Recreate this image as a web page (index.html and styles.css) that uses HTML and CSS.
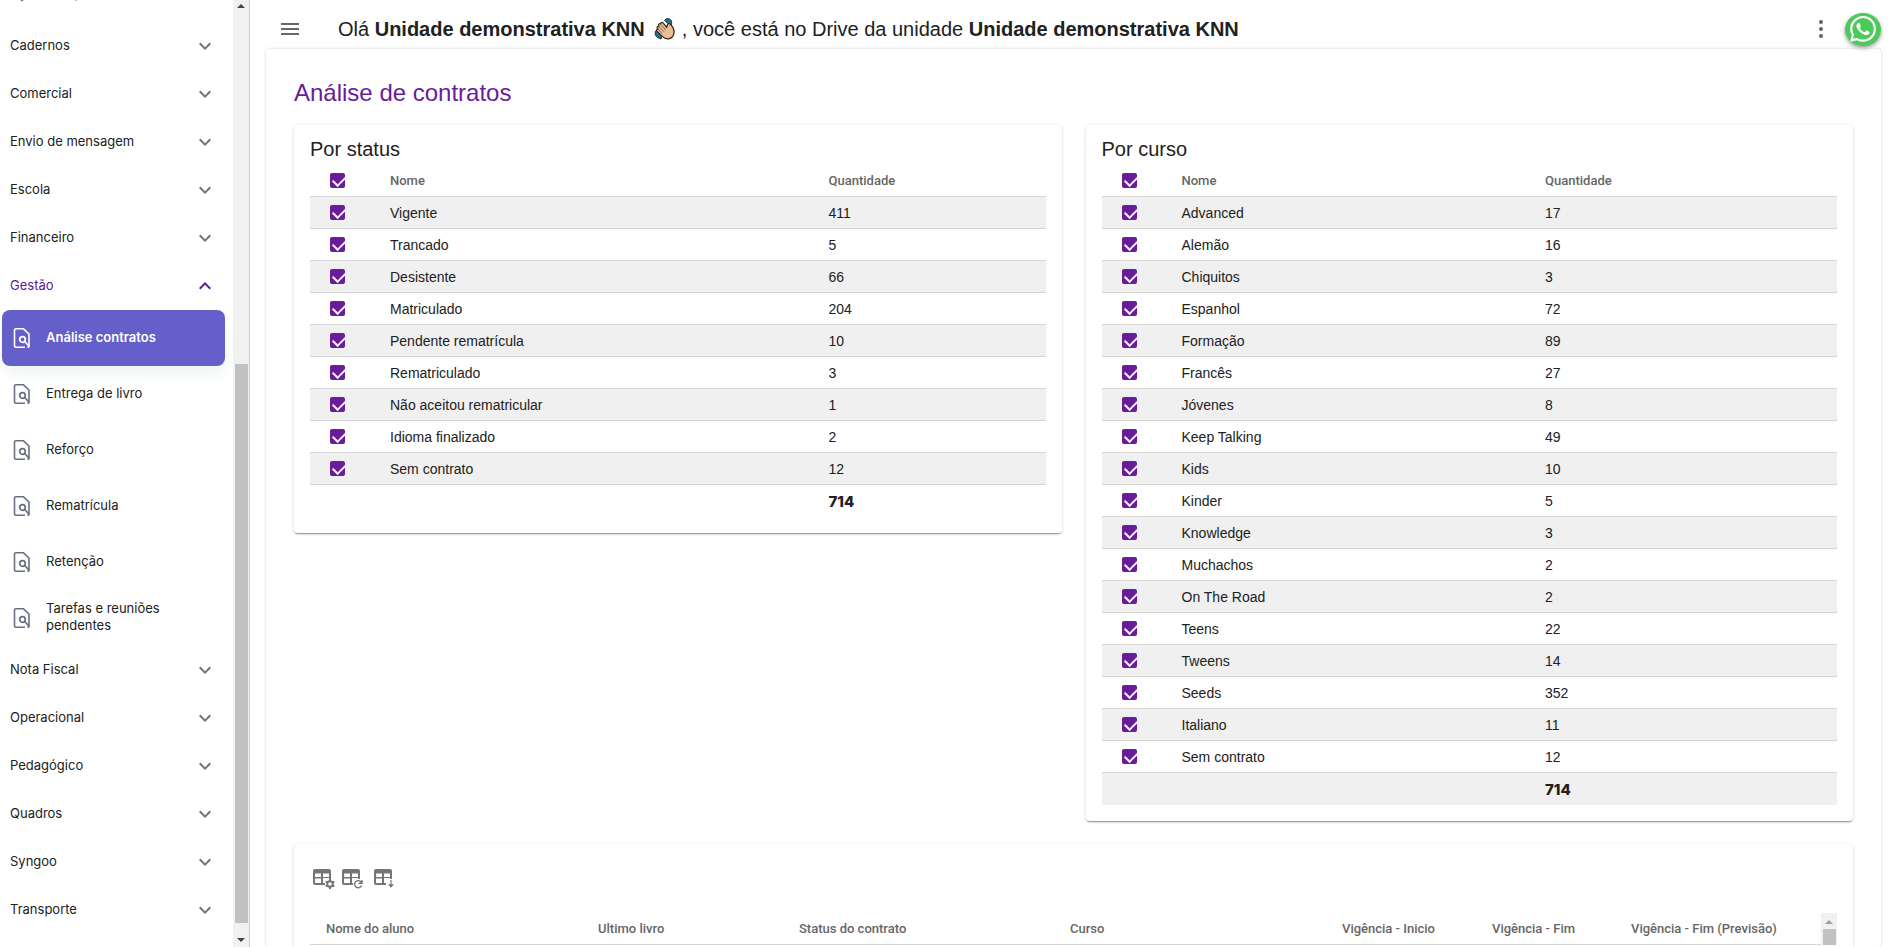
FILE: index.html
```html
<!DOCTYPE html>
<html lang="pt-BR">
<head>
<meta charset="utf-8">
<title>Análise de contratos</title>
<link rel="stylesheet" href="styles.css">
</head>
<body>
<svg class="defs" aria-hidden="true">
  <symbol id="chev" viewBox="0 0 24 24"><path d="M7.4 8.6 12 13.2l4.6-4.6L18 10l-6 6-6-6z" fill="currentColor"/></symbol>
  <symbol id="doc" viewBox="0 0 20 22"><path d="M15.500 20.500l1.500-1V7L11.500 1.800H4Q2.500 1.800 2.500 3.300V18.700Q2.500 20.200 4 20.200H13" fill="none" stroke="currentColor" stroke-width="1.600" stroke-linejoin="round"/><circle cx="10.500" cy="12.500" r="2.800" fill="none" stroke="currentColor" stroke-width="1.700"/><path d="M12.500 14.500l4.500 4.500" stroke="currentColor" stroke-width="1.700"/></symbol>
  <symbol id="pin" viewBox="0 0 20 22"><path d="M10 1.500a6 6 0 0 0-6 6c0 4 6 10 6 10s6-6 6-10a6 6 0 0 0-6-6z" fill="none" stroke="currentColor" stroke-width="1.600"/></symbol>
  <symbol id="grid" viewBox="0 0 24 24"><path fill-rule="evenodd" d="M3 2h14a2 2 0 0 1 2 2v8h-2v-1h-6v5h2v2H3a2 2 0 0 1-2-2V4a2 2 0 0 1 2-2zM3 6.500v3.500h6V6.500zM11 6.500v3.500h6V6.500zM3 11.500V16h6v-4.500z" fill="currentColor"/></symbol>
</svg>
<div class="app">
  <aside class="side">
    <nav class="menu" id="menu"></nav>
    <div class="bar"><span class="arrow up"></span><span class="thumb"></span><span class="arrow down"></span></div>
  </aside>
  <div class="page">
    <header class="top">
      <button class="icon-btn" aria-label="Menu"><svg width="18" height="12" viewBox="0 0 18 12"><path d="M0 1h18M0 6h18M0 11h18" stroke="#666" stroke-width="2"/></svg></button>
      <p class="hello">Olá <b>Unidade demonstrativa KNN</b>
        <svg class="wave" width="22" height="22" viewBox="0 0 22 22"><path d="M10.500 2.500Q12-.5 15 .8q3.500 1.200 2.500 6l-3-1zM1.500 13q-2 6 5.500 8l1-3-5-4z" fill="#28708a" stroke="#1d3a45"/><path d="M3 9.500q.5-1.500 2-.8l-.6-1.900q.8-1.800 2.200-.8l.4-1.200q1.300-1 2.300.3l3.400 4.200.8-2.600q.5-1.700 2.200-.9l1 .8q3.800 3.600 3.300 8-.5 5-4.500 6-4 .9-7-2l-5.700-5.500q-.8-1.400.7-2l1 .3-1.300-1.200z" fill="#e8bd98" stroke="#33241b" stroke-width="1.200" stroke-linejoin="round"/><path d="M5 8.700l5 5M7 6.500l4.600 5.400M3.500 10.500l4.500 5" stroke="#8a6248" fill="none"/></svg>
        , você está no Drive da unidade <b>Unidade demonstrativa KNN</b></p>
      <button class="icon-btn" aria-label="Mais opções"><svg width="6" height="20" viewBox="0 0 6 20" fill="#5f6368"><circle cx="3" cy="3" r="2"/><circle cx="3" cy="10" r="2"/><circle cx="3" cy="17" r="2"/></svg></button>
      <a class="whats" href="#" aria-label="WhatsApp"><svg width="26" height="26" viewBox="0 0 24 24" fill="#fff"><path d="M17.472 14.382c-.297-.149-1.758-.867-2.030-.967-.273-.099-.471-.148-.670.150-.197.297-.767.966-.940 1.164-.173.199-.347.223-.644.075-.297-.150-1.255-.463-2.390-1.475-.883-.788-1.480-1.761-1.653-2.059-.173-.297-.018-.458.130-.606.134-.133.298-.347.446-.520.149-.174.198-.298.298-.497.099-.198.050-.371-.025-.520-.075-.149-.669-1.612-.916-2.207-.242-.579-.487-.500-.669-.510-.173-.008-.371-.010-.570-.010-.198 0-.520.074-.792.372-.272.297-1.040 1.016-1.040 2.479 0 1.462 1.065 2.875 1.213 3.074.149.198 2.096 3.200 5.077 4.487.709.306 1.262.489 1.694.625.712.227 1.360.195 1.871.118.571-.085 1.758-.719 2.006-1.413.248-.694.248-1.289.173-1.413-.074-.124-.272-.198-.570-.347zM.057 24l1.687-6.163A11.900 11.900 0 0 1 .150 11.893C.157 5.335 5.495 0 12.050 0a11.900 11.900 0 0 1 11.893 11.893c-.003 6.557-5.338 11.892-11.893 11.892a11.900 11.900 0 0 1-5.688-1.448zM6.600 20.200c1.600 1 3.200 1.600 5.450 1.600 5.450 0 9.890-4.430 9.890-9.890A9.880 9.880 0 1 0 3.700 17.100l-1 3.650z"/></svg></a>
    </header>
    <main class="sheet">
      <h1>Análise de contratos</h1>
      <div class="cards">
        <section class="card"><h2>Por status</h2><table class="list status" id="status"></table></section>
        <section class="card"><h2>Por curso</h2><table class="list curso" id="curso"></table></section>
      </div>
      <section class="card students">
        <div class="tools">
          <button aria-label="Configurar colunas"><svg width="24" height="24" viewBox="0 0 24 24"><use href="#grid"/><circle cx="18" cy="17" r="5" fill="#fff"/><circle cx="18" cy="17" r="2.800" fill="none" stroke="currentColor" stroke-width="2"/><path d="M18 12v2M18 20v2M13.700 14.500l1.600 1M20.700 18.500l1.600 1M13.700 19.500l1.600-1M20.700 15.500l1.600-1" stroke="currentColor" stroke-width="2"/></svg></button>
          <button aria-label="Restaurar colunas"><svg width="24" height="24" viewBox="0 0 24 24"><use href="#grid"/><circle cx="17" cy="17" r="5" fill="#fff"/><path d="M20.400 15.500a3.600 3.600 0 1 0 .2 3M21 13v3.200h-3.500" fill="none" stroke="currentColor" stroke-width="1.400"/></svg></button>
          <button class="apart" aria-label="Exportar tabela"><svg width="24" height="24" viewBox="0 0 24 24"><use href="#grid"/><path d="M18 13v6M16.300 17.800h3.400L18 19.800z" fill="currentColor" stroke="currentColor" stroke-width="1.200"/></svg></button>
        </div>
        <div class="scroller">
          <table class="wide"><thead><tr><th>Nome do aluno</th><th>Ultimo livro</th><th>Status do contrato</th><th>Curso</th><th>Vigência - Inicio</th><th>Vigência - Fim</th><th>Vigência - Fim (Previsão)</th></tr></thead></table>
          <div class="bar light"><span class="arrow up"></span><span class="thumb"></span></div>
        </div>
      </section>
    </main>
  </div>
</div>
<script src="app.js"></script>
</body>
</html>
```
FILE: styles.css
```css
* { box-sizing: border-box; }
body { margin: 0; background: #fff; color: #212121; font-family: "Liberation Sans", Arial, sans-serif; font-size: 14px; }
button { border: 0; padding: 0; background: none; font: inherit; color: inherit; cursor: pointer; }
a { color: inherit; text-decoration: none; }
.defs { display: none; }
.app { display: flex; height: 100vh; overflow: hidden; }

.side { display: flex; flex: none; width: 250px; border-right: 1px solid #ccc; overflow: hidden; }
.menu { display: flex; flex: 1; flex-direction: column; justify-content: flex-end; padding-bottom: 13px; font-family: Inter, sans-serif; font-size: 13px; }
.menu span { padding-bottom: 2px; }
.group { display: flex; flex: none; align-items: center; justify-content: space-between; height: 48px; padding: 0 16px 0 10px; text-align: left; }
.group svg { width: 24px; height: 24px; color: #757575; }
.group.open, .group.open svg { color: #5b1a94; }
.group.open svg { transform: rotate(180deg); }
.item { display: flex; flex: none; align-items: center; gap: 14px; height: 56px; margin: 0 8px 0 2px; padding: 0 48px 0 10px; border-radius: 8px; line-height: 17px; }
.item svg { flex: none; width: 20px; height: 22px; color: #6b7080; }
.item.active { background: #655fc9; color: #fff; font-weight: 600; box-shadow: 0 8px 16px #f0f4f4; padding-right: 16px; }
.item.active svg { color: #fff; }

.bar { display: flex; flex: none; flex-direction: column; align-items: center; width: 16px; background: #f1f1f1; }
.arrow { width: 0; height: 0; margin: 4px 0; border: 4px solid transparent; }
.up { border-top: 0; border-bottom-color: #444; }
.down { border-bottom: 0; border-top-color: #444; margin: 15px 0 5px; }
.thumb { width: 13px; background: #c1c1c1; }
.side .thumb { height: 59vh; margin-top: auto; }

.page { display: flex; flex: 1; flex-direction: column; min-width: 0; padding: 0 8px 0 16px; }
.top { display: flex; flex: none; align-items: center; height: 49px; padding-top: 9px; }
.icon-btn { display: flex; flex: none; align-items: center; justify-content: center; width: 48px; height: 40px; }
.hello { flex: 1; margin: 0 0 0 24px; font-size: 20px; line-height: 40px; white-space: nowrap; }
.wave { margin-left: 4px; vertical-align: -4px; }
.whats { display: flex; flex: none; align-items: center; justify-content: center; width: 36px; height: 33px; border-radius: 50%; background: #4bca5a; box-shadow: 0 2px 4px #999; }
.sheet { display: flex; flex: 1; flex-direction: column; min-height: 0; padding: 28px 28px 0; border-radius: 4px; box-shadow: 0 0 3px #ccc; }
h1 { margin: 0 0 16px; color: #6a1b9a; font-size: 24px; font-weight: 400; line-height: 32px; }
.cards { display: grid; grid-template-columns: 1fr 1fr; gap: 24px; align-items: start; }
.card { padding: 12px 16px 16px; border-radius: 4px; background: #fff; box-shadow: 0 2px 1px -1px #999, 0 1px 3px #ccc; }
h2 { margin: 0 0 4px; font-size: 20px; font-weight: 400; line-height: 24px; }

table { width: 100%; border-collapse: separate; border-spacing: 0; table-layout: fixed; }
th, td { padding: 0; text-align: left; }
th { color: #666; font-family: Roboto, sans-serif; font-size: 13px; font-weight: 500; }
.list td, .list th { height: 32px; border-bottom: 1px solid #d6d6d6; }
.list tbody tr:nth-child(odd) { background: #f0f0f0; }
.list tbody tr:last-child td { border-bottom: 0; font-family: Inter, sans-serif; font-size: 15px; font-weight: 800; }
.list .pick { width: 80px; padding-left: 20px; }
.status .qty { width: 217px; }
.curso .qty { width: 292px; }
input[type="checkbox"] { display: block; appearance: none; width: 15px; height: 15px; margin: 0; border-radius: 2px; background: #6a1b9a; }
input[type="checkbox"]:checked::after { content: ""; display: block; width: 6px; height: 10px; margin: 1px 0 0 5px; border: solid #fff; border-width: 0 2px 2px 0; transform: rotate(45deg); }

.students { flex: 1; margin-top: 23px; padding: 23px 16px 0; border-radius: 4px 4px 0 0; }
.tools { display: flex; align-items: flex-start; gap: 5px; height: 46px; padding-left: 2px; color: #757575; }
.tools svg { display: block; }
.tools .apart { margin-left: 3px; }
.scroller { display: flex; }
.wide { flex: 1; width: auto; }
.wide th { height: 32px; padding-left: 16px; border-bottom: 1px solid #d6d6d6; white-space: nowrap; }
.wide th:nth-child(1) { width: 272px; }
.wide th:nth-child(2) { width: 201px; }
.wide th:nth-child(3) { width: 271px; }
.wide th:nth-child(4) { width: 272px; }
.wide th:nth-child(5) { width: 150px; }
.wide th:nth-child(6) { width: 139px; }
.light .arrow { border-bottom-color: #a0a0a0; margin: 7px 0 5px; }
.light .thumb { flex: 1; }
```
FILE: app.js
```js
const groups = [
  ["Comunicação", ["Campanhas"]],
  ["Cadernos"], ["Comercial"], ["Envio de mensagem"], ["Escola"], ["Financeiro"],
  ["Gestão", ["Análise contratos", "Entrega de livro", "Reforço", "Rematrícula", "Retenção", "Tarefas e reuniões pendentes"]],
  ["Nota Fiscal"], ["Operacional"], ["Pedagógico"], ["Quadros"], ["Syngoo"], ["Transporte"]
];
document.getElementById("menu").innerHTML = groups.map(([name, items]) =>
  `<button class="group${items ? " open" : ""}"><span>${name}</span><svg><use href="#chev"/></svg></button>` +
  (items || []).map(t => `<a href="#" class="item${t === "Análise contratos" ? " active" : ""}"><svg><use href="#${t === "Campanhas" ? "pin" : "doc"}"/></svg><span>${t}</span></a>`).join("")
).join("");

const data = {
  status: [["Vigente", 411], ["Trancado", 5], ["Desistente", 66], ["Matriculado", 204], ["Pendente rematrícula", 10], ["Rematriculado", 3], ["Não aceitou rematricular", 1], ["Idioma finalizado", 2], ["Sem contrato", 12]],
  curso: [["Advanced", 17], ["Alemão", 16], ["Chiquitos", 3], ["Espanhol", 72], ["Formação", 89], ["Francês", 27], ["Jóvenes", 8], ["Keep Talking", 49], ["Kids", 10], ["Kinder", 5], ["Knowledge", 3], ["Muchachos", 2], ["On The Road", 2], ["Teens", 22], ["Tweens", 14], ["Seeds", 352], ["Italiano", 11], ["Sem contrato", 12]]
};
for (const [id, rows] of Object.entries(data)) {
  document.getElementById(id).innerHTML =
    `<thead><tr><th class="pick"><input type="checkbox" checked aria-label="Selecionar todos"></th><th>Nome</th><th class="qty">Quantidade</th></tr></thead><tbody>` +
    rows.map(([n, q], i) => `<tr><td class="pick"><input type="checkbox" checked id="${id}${i}"></td><td><label for="${id}${i}">${n}</label></td><td>${q}</td></tr>`).join("") +
    `<tr><td></td><td></td><td>714</td></tr></tbody>`;
}
```
